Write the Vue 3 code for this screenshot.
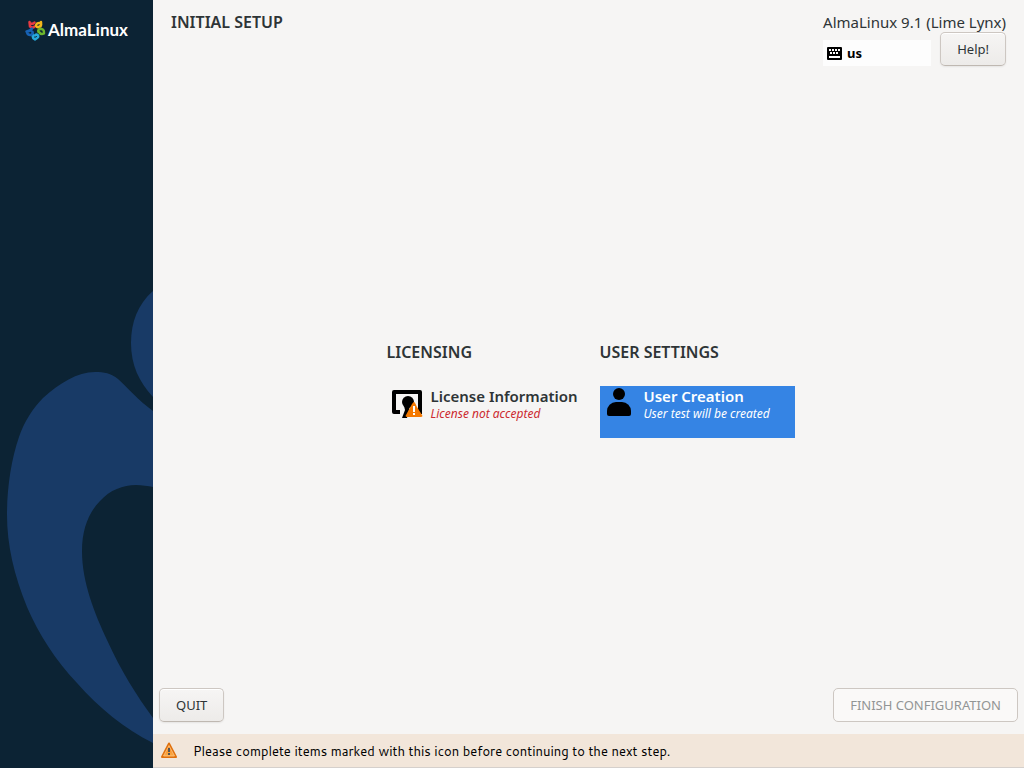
<script setup>
import { ref } from 'vue'

const layout = ref('us')
const sections = [
  {
    title: 'LICENSING',
    name: 'License Information',
    status: 'License not accepted',
    icon: 'license',
    warning: true,
    selected: false
  },
  {
    title: 'USER SETTINGS',
    name: 'User Creation',
    status: 'User test will be created',
    icon: 'user',
    warning: false,
    selected: true
  }
]
</script>

<template>
  <div class="screen">
    <aside class="sidebar">
      <svg class="backdrop" viewBox="0 0 153 768" preserveAspectRatio="xMinYMax slice" aria-hidden="true">
        <path d="M153 291C138 304 131 322 131 343C131 365 139 382 153 397Z" />
        <path d="M153 411C138 400 128 388 118 379C111 373 104 372 95 372C77 372 60 383 43 398C33 408 24 422 19 437C11 460 7 489 7 515C7 545 14 575 27 607C38 633 56 661 77 683C99 708 125 729 153 743V718C137 696 121 671 107 640C95 614 82 583 82 551C82 529 89 512 100 501C110 490 123 485 136 485C142 485 148 486 153 487Z" />
      </svg>
      <div class="brand">
        <svg width="21" height="21" viewBox="0 0 21 21" fill="none" stroke-width="2.5" stroke-linecap="round" aria-hidden="true">
          <path stroke="#e83a42" d="M4.500 2L5 6.500Q8 8.500 9.500 6.500M5.500 3.500Q8 4.500 9.500 2.500" />
          <path stroke="#f5b81b" d="M16 2Q16.500 5 15.500 6.500M15.500 3Q11 2.500 11 6Q12.500 8 14.500 6.500" />
          <path stroke="#6cb52d" d="M19 13.500Q16 15 14.500 12.500M19 12.500Q19 8.500 15 9Q12.500 10 13.500 12" />
          <path stroke="#27a9dc" d="M10 19.500Q7 18 8 15M10.500 19Q14 17.500 13 15.500Q11 13.500 10 15.500" />
          <path stroke="#1762b5" d="M1.500 11.500Q5.500 11 7 8.500M2 12Q2.500 15.500 6 15Q9 13 7 11.500" />
        </svg>
        <span>AlmaLinux</span>
      </div>
    </aside>

    <div class="main">
      <header class="top">
        <h1>INITIAL SETUP</h1>
        <div class="release">
          <p class="product">AlmaLinux 9.1 (Lime Lynx)</p>
          <div class="tools">
            <button type="button" class="keyboard" aria-label="Keyboard layout">
              <svg width="16" height="14" viewBox="0 0 16 14" aria-hidden="true">
                <rect width="15" height="13" x="0" y="1" rx="1" />
                <path fill="#fff" d="M2 3h2v2H2zM5 3h2v2H5zM8 3h2v2H8zM11 3h2v2h-2zM3 6h2v2H3zM6 6h2v2H6zM9 6h2v2H9zM2 10h11v2H2z" />
              </svg>
              <span>{{ layout }}</span>
            </button>
            <button type="button" class="btn help">Help!</button>
          </div>
        </div>
      </header>

      <main class="hub">
        <section v-for="s in sections" :key="s.title" class="group">
          <h2>{{ s.title }}</h2>
          <button type="button" class="spoke" :class="{ selected: s.selected }">
            <svg v-if="s.icon === 'license'" class="icon" width="32" height="32" viewBox="0 0 32 32" aria-hidden="true">
              <path d="M2 2h26a2 2 0 0 1 2 2v22h-4V6H4v16h4v4H2a2 2 0 0 1-2-2V4a2 2 0 0 1 2-2z" />
              <circle cx="16" cy="14" r="6" />
              <path d="M12 18h6l-3 12h-5l3-8z" />
              <path fill="#f57900" d="M22 14c1 0 2 3 3 5l5 8c1 1 0 2-1 2H15c-1 0-2-1-1-2l6-11c1-1 1-2 2-2z" />
              <path fill="#fff" d="M21 18h2v6h-2zM21 25h2v2h-2z" />
            </svg>
            <svg v-else class="icon" width="32" height="32" viewBox="0 0 32 32" aria-hidden="true">
              <circle cx="14" cy="6" r="6" />
              <path d="M2 26v-3a9 9 0 0 1 9-9h6a9 9 0 0 1 9 9v3a2 2 0 0 1-2 2H4a2 2 0 0 1-2-2z" />
            </svg>
            <span class="labels">
              <span class="name">{{ s.name }}</span>
              <span class="status" :class="{ error: s.warning }">{{ s.status }}</span>
            </span>
          </button>
        </section>
      </main>

      <footer>
        <div class="actions">
          <button type="button" class="btn">QUIT</button>
          <button type="button" class="btn" disabled>FINISH CONFIGURATION</button>
        </div>
        <div class="notice" role="status">
          <svg width="16" height="18" viewBox="0 0 16 18" aria-hidden="true">
            <defs>
              <linearGradient id="amber" x1="0" y1="0" x2="0" y2="1">
                <stop offset="0" stop-color="#f57c10" />
                <stop offset="1" stop-color="#fcae4a" />
              </linearGradient>
            </defs>
            <path d="M8 1.500L15 15H1z" fill="url(#amber)" stroke="#e0700c" stroke-width="2" stroke-linejoin="round" />
            <path d="M8 3.500L13.500 14H2.500z" fill="none" stroke="#ffc98a" stroke-width=".8" />
            <path d="M7 6h2v4H7zM7 11h2v2H7z" fill="#555" />
          </svg>
          <p>Please complete items marked with this icon before continuing to the next step.</p>
        </div>
      </footer>
    </div>
  </div>
</template>

<style>
body {
  margin: 0;
}
</style>

<style scoped>
.screen {
  display: flex;
  min-height: 100vh;
  background: #f6f5f4;
  color: #2e3436;
  font-family: "Noto Sans", "Open Sans", sans-serif;
  font-size: 13px;
}
h1,
h2,
p {
  margin: 0;
}
button {
  font: inherit;
  color: inherit;
}
.sidebar {
  position: relative;
  flex: 0 0 153px;
  background: #0c2334;
  overflow: hidden;
}
.backdrop {
  position: absolute;
  inset: 0;
  width: 100%;
  height: 100%;
  fill: #183a66;
}
.brand {
  position: relative;
  display: flex;
  align-items: center;
  justify-content: center;
  gap: 2px;
  padding-top: 19px;
  color: #fff;
  font-family: Lato, sans-serif;
  font-size: 17px;
  font-weight: 700;
  line-height: 22px;
}
.main {
  flex: 1;
  min-width: 0;
  display: flex;
  flex-direction: column;
}
.top {
  display: flex;
  justify-content: space-between;
  padding: 12px 18px 0;
}
h1,
h2 {
  font-size: 16px;
  font-weight: 600;
  line-height: 20px;
}
.product {
  font-size: 15px;
  line-height: 20px;
}
.tools {
  display: flex;
  align-items: flex-end;
  gap: 9px;
}
.keyboard {
  flex: 1;
  display: flex;
  align-items: center;
  gap: 4px;
  height: 26px;
  padding: 0 4px;
  border: 0;
  background: #fdfdfd;
  color: #000;
  font-weight: 700;
}
.btn {
  height: 34px;
  padding: 0 16px;
  border: 1px solid #cdc7c2;
  border-bottom-color: #bfb8b1;
  border-radius: 5px;
  background: linear-gradient(#f6f5f4, #edebe9);
  box-shadow: inset 0 1px #fff, 0 1px 2px rgba(0, 0, 0, 0.07);
}
.btn:disabled {
  border-color: #cdc7c2;
  background: #faf9f8;
  box-shadow: none;
  color: #929595;
}
.hub {
  flex: 1;
  display: flex;
  align-items: center;
  justify-content: center;
  gap: 18px;
  padding: 26px 0 0 4px;
}
.group {
  width: 195px;
}
h2 {
  margin-bottom: 24px;
}
.spoke {
  display: flex;
  align-items: flex-start;
  gap: 7px;
  width: 100%;
  height: 52px;
  padding: 2px 5px;
  border: 0;
  background: transparent;
  text-align: left;
}
.selected {
  background: #3584e4;
  color: #fff;
}
.icon {
  flex: none;
  fill: #000;
}
.labels {
  display: flex;
  flex-direction: column;
  white-space: nowrap;
}
.name {
  font-size: 15px;
  font-weight: 600;
  line-height: 16px;
}
.status {
  font-size: 12px;
  font-style: italic;
  line-height: 20px;
}
.error {
  color: #cc2a2f;
}
.actions {
  display: flex;
  justify-content: space-between;
  padding: 0 6px 12px;
}
.notice {
  display: flex;
  align-items: center;
  gap: 16px;
  height: 33px;
  padding: 0 8px;
  border-bottom: 1px solid #d5d0cc;
  background: #f2e6da;
  color: #000;
  font-family: Cantarell, "Noto Sans", sans-serif;
}
</style>
